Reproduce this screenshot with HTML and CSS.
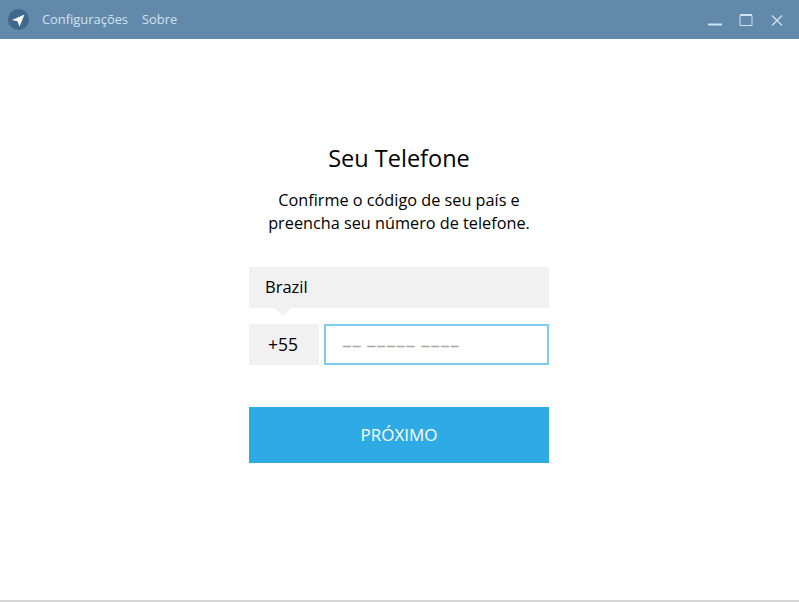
FILE: index.html
```html
<!DOCTYPE html>
<html lang="pt">
<head>
<meta charset="utf-8">
<title>Telegram</title>
<link rel="stylesheet" href="styles.css">
</head>
<body>
<div class="app">
  <header class="titlebar">
    <svg class="logo" viewBox="0 0 21 21" width="21" height="21">
      <circle cx="10.5" cy="10.5" r="10.5" fill="#40688c"/>
      <path d="M4 11 L16.5 5.5 L11.5 17.5 L9.5 12.2 Z" fill="#fff"/>
    </svg>
    <nav class="menu"><span>Configurações</span><span>Sobre</span></nav>
    <div class="controls">
      <svg viewBox="0 0 14 14" width="14" height="14"><path d="M0 11.5H14" stroke="#cfe3f2" stroke-width="2"/></svg>
      <svg viewBox="0 0 14 14" width="14" height="14"><path d="M1 2.5H13V12.5H1Z" fill="none" stroke="#cfe3f2" stroke-width="1"/><path d="M1 2H13" stroke="#cfe3f2" stroke-width="2"/></svg>
      <svg viewBox="0 0 14 14" width="14" height="14"><path d="M2 2.5L12 12.5M12 2.5L2 12.5" fill="none" stroke="#cfe3f2" stroke-width="1.3"/></svg>
    </div>
  </header>
  <main class="content">
    <h1 class="title">Seu Telefone</h1>
    <p class="desc">Confirme o código de seu país e<br>preencha seu número de telefone.</p>
    <div class="country">Brazil</div>
    <div class="phone">
      <div class="code">+55</div>
      <div class="number">–– ––––– ––––</div>
    </div>
    <button class="next">PRÓXIMO</button>
  </main>
  <div class="bottom"></div>
</div>
</body>
</html>
```
FILE: styles.css
```css
* { box-sizing: border-box; }
html, body { margin: 0; height: 100%; background: #fff; overflow: hidden; }
body { font-family: "Open Sans", sans-serif; color: #000; }
.app { height: 602px; display: flex; flex-direction: column; }
.titlebar { height: 39px; flex: none; background: #6389aa; display: flex; align-items: center; padding-left: 8px; }
.logo { flex: none; }
.menu { display: flex; gap: 14px; margin-left: 13px; padding-bottom: 2px; font-size: 12.9px; color: #cfe3f2; }
.controls { margin-left: auto; display: flex; gap: 17px; padding-right: 15px; align-items: center; }
.content { flex: 1; display: flex; flex-direction: column; align-items: center; padding-right: 1px; }
.title { margin: 103px 0 0; font-size: 23.5px; font-weight: 400; line-height: 32px; }
.desc { margin: 15px 0 0; font-size: 16.25px; line-height: 23px; text-align: center; }
.country { position: relative; margin-top: 32px; width: 300px; height: 41px; background: #f1f1f1; font-size: 16.5px; line-height: 40px; padding-left: 16px; }
.country::after { content: ""; position: absolute; left: 26px; top: 41px; border: 8px solid transparent; border-top-color: #f1f1f1; border-bottom: 0; }
.phone { margin-top: 16px; width: 300px; height: 41px; display: flex; gap: 5px; }
.code { width: 70px; background: #f1f1f1; text-align: center; font-size: 17.5px; line-height: 41px; padding-right: 2px; }
.number { flex: 1; border: 2px solid #7fcbeb; padding-left: 16px; font-size: 19.5px; line-height: 37px; color: #a9a9a9; white-space: nowrap; }
.next { margin-top: 42px; width: 300px; height: 56px; border: 0; background: #2eaae5; color: #fff; font: 17px "Open Sans", sans-serif; padding: 0 0 2px; }
.bottom { flex: none; height: 2px; background: #d6d6d6; }
```
